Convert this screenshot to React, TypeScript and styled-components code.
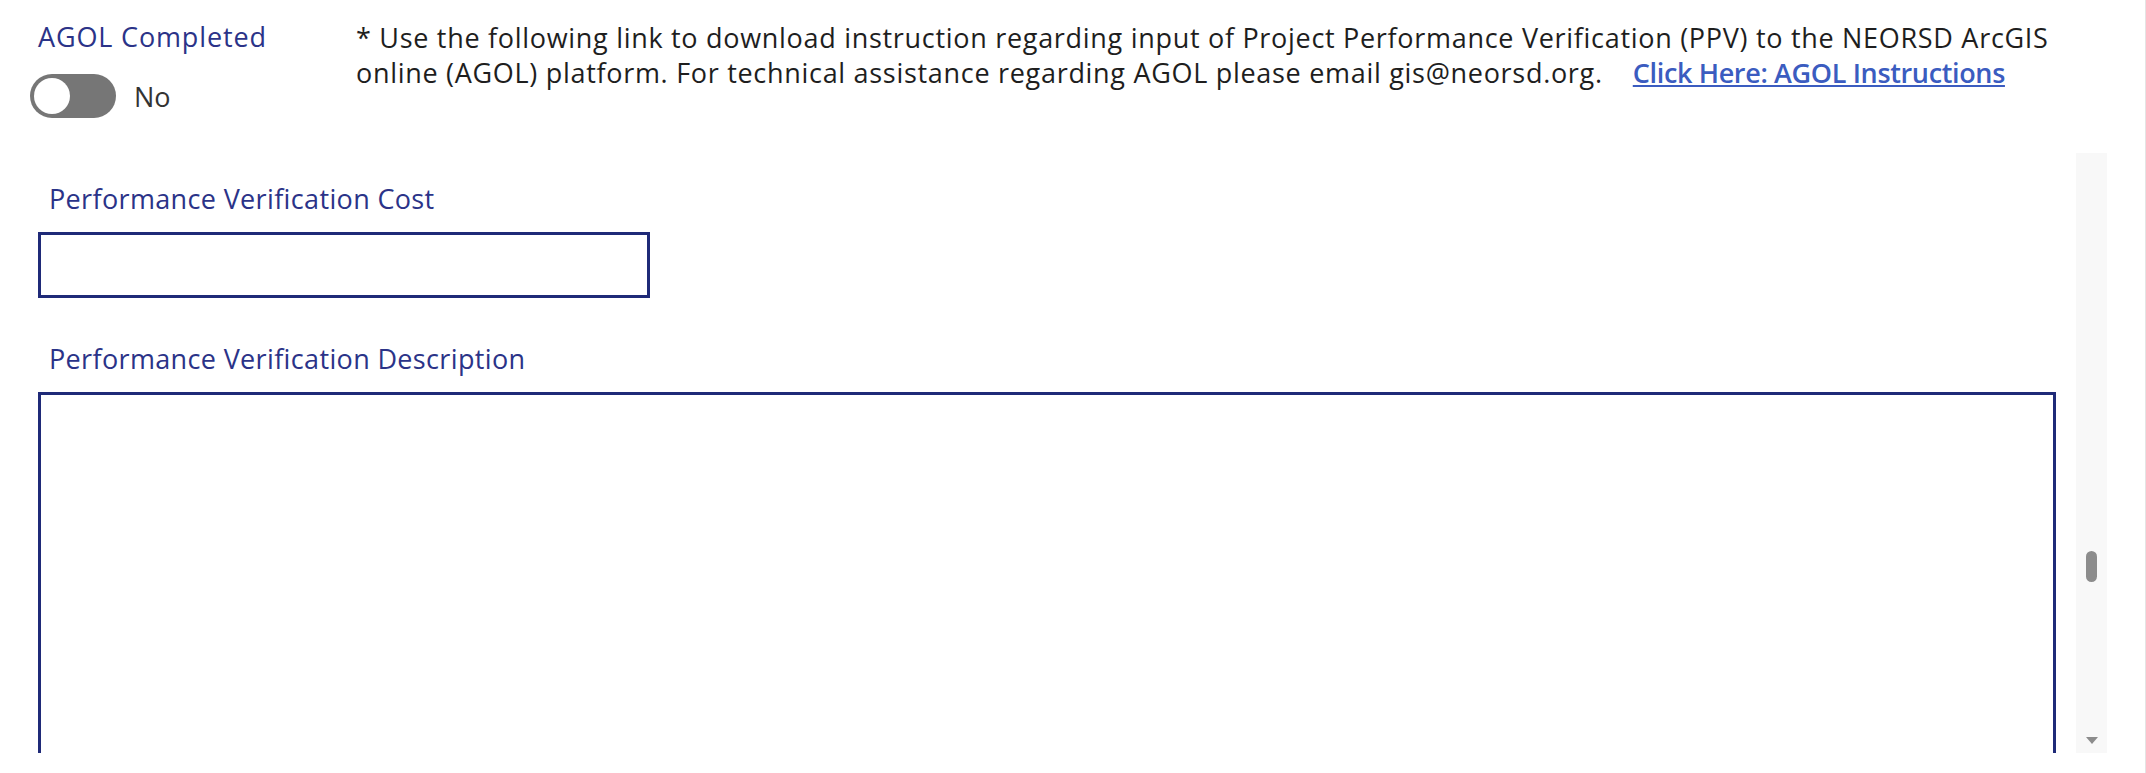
import React from "react";
import styled, { createGlobalStyle } from "styled-components";

const GlobalStyle = createGlobalStyle`
  html, body {
    margin: 0;
    padding: 0;
    background: #ffffff;
  }
  body {
    font-family: "Open Sans", "Liberation Sans", sans-serif;
    color: #222222;
  }
`;

const Page = styled.div`
  width: 2146px;
  height: 773px;
  overflow: hidden;
  display: flex;
  flex-direction: column;
  box-sizing: border-box;
  border-right: 1px solid #e4e4e4;
`;

const Header = styled.div`
  display: flex;
  padding: 20px 0 0 38px;
  height: 153px;
  box-sizing: border-box;
`;

const ToggleGroup = styled.div`
  width: 318px;
  flex-shrink: 0;
`;

const FieldLabel = styled.div<{ $indent?: number; $spacing?: number }>`
  color: #2b3388;
  font-size: 27px;
  line-height: 34px;
  letter-spacing: ${(p) => p.$spacing ?? 0.35}px;
  padding-left: ${(p) => p.$indent ?? 0}px;
`;

const ToggleRow = styled.div`
  display: flex;
  align-items: center;
  gap: 18px;
  margin-top: 20px;
  margin-left: -8px;
`;

const Track = styled.div<{ $on: boolean }>`
  width: 86px;
  height: 44px;
  border-radius: 22px;
  background: ${(p) => (p.$on ? "#2b3388" : "#767676")};
  display: flex;
  align-items: center;
  justify-content: ${(p) => (p.$on ? "flex-end" : "flex-start")};
  padding: 0 4px;
  box-sizing: border-box;
`;

const Knob = styled.div`
  width: 36px;
  height: 36px;
  border-radius: 50%;
  background: #ffffff;
`;

const ToggleText = styled.span`
  font-size: 27px;
  color: #333333;
`;

const Note = styled.p`
  margin: 0;
  font-size: 27px;
  line-height: 35px;
  letter-spacing: 0.7px;
  color: #1e1e1e;
  white-space: nowrap;
`;

const Link = styled.a`
  margin-left: 30px;
  color: #3b5cc0;
  font-weight: 600;
  letter-spacing: -0.35px;
  text-decoration: underline;
`;

const Panel = styled.div`
  display: flex;
  height: 600px;
  margin-right: 38px;
  overflow: hidden;
`;

const PanelBody = styled.div`
  flex: 1;
  padding: 29px 20px 0 38px;
  display: flex;
  flex-direction: column;
`;

const Field = styled.div`
  display: flex;
  flex-direction: column;
  gap: 16px;
  margin-bottom: 44px;
`;

const InputBox = styled.div<{ $width?: string; $height: number }>`
  width: ${(p) => p.$width ?? "100%"};
  height: ${(p) => p.$height}px;
  border: 3px solid #1f2a78;
  box-sizing: border-box;
  flex-shrink: 0;
`;

const ScrollTrack = styled.div`
  width: 31px;
  flex-shrink: 0;
  background: #f8f8f8;
  display: flex;
  flex-direction: column;
  align-items: center;
  justify-content: flex-end;
  position: relative;
`;

const Thumb = styled.div`
  position: absolute;
  top: 398px;
  left: 10px;
  width: 11px;
  height: 31px;
  border-radius: 6px;
  background: #8c8c8c;
`;

const ArrowDown = styled.div`
  width: 0;
  height: 0;
  border-left: 6px solid transparent;
  border-right: 6px solid transparent;
  border-top: 7px solid #8c8c8c;
  margin-bottom: 9px;
`;

export default function App() {
  const agolCompleted = false;

  return (
    <>
      <GlobalStyle />
      <Page>
        <Header>
          <ToggleGroup>
            <FieldLabel $spacing={0.85}>AGOL Completed</FieldLabel>
            <ToggleRow>
              <Track $on={agolCompleted}>
                <Knob />
              </Track>
              <ToggleText>{agolCompleted ? "Yes" : "No"}</ToggleText>
            </ToggleRow>
          </ToggleGroup>
          <Note>
            * Use the following link to download instruction regarding input of Project Performance
            Verification (PPV) to the NEORSD ArcGIS
            <br />
            online (AGOL) platform. For technical assistance regarding AGOL please email
            gis@neorsd.org.
            <Link href="#">Click Here: AGOL Instructions</Link>
          </Note>
        </Header>
        <Panel>
          <PanelBody>
            <Field>
              <FieldLabel $indent={11}>Performance Verification Cost</FieldLabel>
              <InputBox $width="612px" $height={66} />
            </Field>
            <Field>
              <FieldLabel $indent={11}>Performance Verification Description</FieldLabel>
              <InputBox $height={420} />
            </Field>
          </PanelBody>
          <ScrollTrack>
            <Thumb />
            <ArrowDown />
          </ScrollTrack>
        </Panel>
      </Page>
    </>
  );
}
